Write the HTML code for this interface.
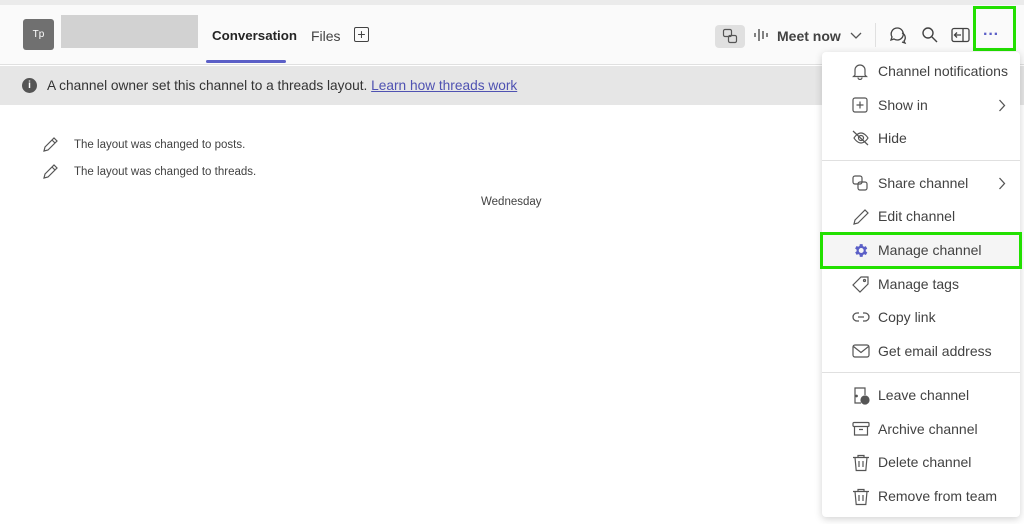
<!DOCTYPE html>
<html><head><style>
*{margin:0;padding:0;box-sizing:border-box}
body{width:1024px;height:524px;overflow:hidden;background:#fff;font-family:"Liberation Sans",sans-serif;position:relative;color:#242424}
.abs{position:absolute}
.top{left:0;top:0;width:1024px;height:5px;background:#ebebeb}
.hdr{left:0;top:5px;width:1024px;height:60px;background:#fafafa;border-bottom:1px solid #e0e0e0}
.av{left:23px;top:19px;width:31px;height:31px;background:#707070;border-radius:3px;color:#fff;font-size:10px;text-align:center;line-height:31px}
.name{left:61px;top:15px;width:137px;height:33px;background:#d2d2d2}
.tab{font-size:14px;top:28px}
.banner{left:0;top:66px;width:1024px;height:39px;background:#e6e6e6;font-size:13.7px;color:#333}
.sys{font-size:11.5px;color:#424242}
.menu{left:822px;top:52px;width:198px;height:465px;background:#fff;border-radius:4px;box-shadow:0 2px 8px rgba(0,0,0,.18)}
.it{position:absolute;left:0;width:198px;height:34px;font-size:14px;color:#424242;line-height:34px;padding-left:56px}
.it svg{position:absolute;left:30px;top:9px}
.it svg.chev{left:auto;right:14px;top:11px}
.div{position:absolute;left:0;width:198px;height:1px;background:#e0e0e0}
</style></head><body>
<div class="abs top"></div>
<div class="abs hdr"></div>
<div class="abs av">Tp</div>
<div class="abs name"></div>
<div class="abs tab" style="left:212px;font-weight:bold;color:#242424;font-size:13.3px">Conversation</div>
<div class="abs" style="left:206px;top:60px;width:80px;height:3px;background:#5b5fc7;border-radius:2px"></div>
<div class="abs tab" style="left:311px;color:#424242">Files</div>
<div class="abs" style="left:354px;top:27px;width:15px;height:15px;border:1.3px solid #424242;border-radius:2px;text-align:center;line-height:12px;font-size:14px;color:#424242">+</div>
<div class="abs" style="left:715px;top:25px;width:30px;height:23px;background:#e0e0e0;border-radius:4px"></div>
<svg class="abs" style="left:722px;top:28px" width="16" height="16" viewBox="0 0 16 16" fill="none" stroke="#555" stroke-width="1.2"><rect x="1.5" y="1.5" width="8" height="7" rx="1.5"/><rect x="6.5" y="7.5" width="8" height="7" rx="1.5"/></svg>
<svg class="abs" style="left:753px;top:26px" width="16" height="18" stroke="#424242" stroke-width="1.3"><path d="M2 7v4M6 3v12M10 5v8M14 7v4"/></svg>
<div class="abs" style="left:777px;top:28px;font-size:14px;font-weight:bold;color:#424242">Meet now</div>
<svg class="abs" style="left:850px;top:30px" width="12" height="10" fill="none" stroke="#555" stroke-width="1.3"><path d="M1 3l5 5 5-5"/></svg>
<div class="abs" style="left:875px;top:23px;width:1px;height:24px;background:#e0e0e0"></div>
<svg class="abs" style="left:888px;top:25px" width="20" height="20" fill="none" stroke="#424242" stroke-width="1.3"><path d="M9 3a6 6 0 0 0-5 9l-1 3 3-1a6 6 0 1 0 3-11z"/><path d="M14 8a5 5 0 0 1 2 8l1 2-3-1"/></svg>
<svg class="abs" style="left:921px;top:26px" width="18" height="18" fill="none" stroke="#424242" stroke-width="1.4"><circle cx="7" cy="7" r="5"/><path d="M11 11l5 5"/></svg>
<svg class="abs" style="left:951px;top:27px" width="20" height="16" fill="none" stroke="#424242" stroke-width="1.3"><rect x="1" y="1.5" width="17" height="13" rx="2"/><path d="M12 1.5v13M10 8H4M6 5.5L3.5 8 6 10.5"/></svg>
<div class="abs" style="left:983px;top:26px;color:#5b5fc7;font-size:16px;font-weight:bold">···</div>
<div class="abs" style="left:973px;top:6px;width:43px;height:45px;border:3px solid #22e000"></div>
<div class="abs banner">
<div class="abs" style="left:22px;top:12px;width:15px;height:15px;border-radius:50%;background:#555;color:#fff;font-size:10px;font-weight:bold;text-align:center;line-height:15px">i</div>
<div class="abs" style="left:47px;top:12px">A channel owner set this channel to a threads layout. <span style="color:#4f52b2;text-decoration:underline">Learn how threads work</span></div>
</div>
<svg class="abs" style="left:41px;top:136px" width="18" height="18" fill="none" stroke="#555" stroke-width="1.2"><path d="M3 15l1-4 9-9 3 3-9 9z M11 4l3 3"/></svg>
<div class="abs sys" style="left:74px;top:139px">The layout was changed to posts.</div>
<svg class="abs" style="left:41px;top:163px" width="18" height="18" fill="none" stroke="#555" stroke-width="1.2"><path d="M3 15l1-4 9-9 3 3-9 9z M11 4l3 3"/></svg>
<div class="abs sys" style="left:74px;top:166px">The layout was changed to threads.</div>
<div class="abs sys" style="left:481px;top:196px">Wednesday</div>

<div class="abs menu">
<div class="it" style="top:2px"><svg width="16" height="17" fill="none" stroke="#555" stroke-width="1.2"><path d="M3 12V7a5 5 0 0 1 10 0v5l1.5 1.5h-13zM6 14.5a2 2 0 0 0 4 0"/></svg>Channel notifications</div>
<div class="it" style="top:36px"><svg width="16" height="16" fill="none" stroke="#555" stroke-width="1.2"><rect x="1" y="1" width="14" height="14" rx="2"/><path d="M8 4.5v7M4.5 8h7"/></svg>Show in<svg class="chev" width="8" height="13" fill="none" stroke="#555" stroke-width="1.3"><path d="M1.5 1l5 5.5-5 5.5"/></svg></div>
<div class="it" style="top:69px"><svg width="18" height="16" fill="none" stroke="#555" stroke-width="1.2"><path d="M1 1l15 14M2 8s3-5 7-5 7 5 7 5-3 5-7 5-7-5-7-5z"/><circle cx="9" cy="8" r="2.5"/></svg>Hide</div>
<div class="div" style="top:108px"></div>
<div class="it" style="top:114px"><svg width="16" height="16" fill="none" stroke="#555" stroke-width="1.2"><rect x="1" y="1" width="9" height="8" rx="2"/><rect x="6" y="7" width="9" height="8" rx="2"/></svg>Share channel<svg class="chev" width="8" height="13" fill="none" stroke="#555" stroke-width="1.3"><path d="M1.5 1l5 5.5-5 5.5"/></svg></div>
<div class="it" style="top:147px"><svg width="18" height="18" fill="none" stroke="#555" stroke-width="1.2"><path d="M2 16l1-4 10-10 3 3-10 10z"/></svg>Edit channel</div>
<div class="it" style="top:181px;background:#f5f5f5"><svg width="17" height="17" viewBox="0 0 24 24" fill="#5b5fc7"><path d="M19.4 13a7.5 7.5 0 0 0 0-2l2.1-1.6-2-3.5-2.5 1a7 7 0 0 0-1.7-1L15 3h-4l-.4 2.7a7 7 0 0 0-1.7 1l-2.5-1-2 3.5L6.6 11a7.5 7.5 0 0 0 0 2l-2.1 1.6 2 3.5 2.5-1a7 7 0 0 0 1.7 1L11 21h4l.4-2.7a7 7 0 0 0 1.7-1l2.5 1 2-3.5zM13 15.5a3.5 3.5 0 1 1 0-7 3.5 3.5 0 0 1 0 7z"/></svg>Manage channel</div>
<div class="it" style="top:215px"><svg width="18" height="18" fill="none" stroke="#555" stroke-width="1.2"><path d="M9 1h7v7l-8 8-7-7z"/><circle cx="12.5" cy="4.5" r="1"/></svg>Manage tags</div>
<div class="it" style="top:248px"><svg width="18" height="16" fill="none" stroke="#555" stroke-width="1.3"><path d="M7 4H5a4 4 0 0 0 0 8h2M11 4h2a4 4 0 0 1 0 8h-2M6 8h6"/></svg>Copy link</div>
<div class="it" style="top:282px"><svg width="18" height="16" fill="none" stroke="#555" stroke-width="1.2"><rect x="1" y="2" width="16" height="12" rx="2"/><path d="M1.5 3.5l7.5 6 7.5-6"/></svg>Get email address</div>
<div class="div" style="top:320px"></div>
<div class="it" style="top:326px"><svg width="18" height="18" fill="none" stroke="#555" stroke-width="1.2"><path d="M9 16H3V1h10v7"/><circle cx="4.5" cy="9" r=".8" fill="#555"/><circle cx="13" cy="13" r="4" fill="#555"/></svg>Leave channel</div>
<div class="it" style="top:360px"><svg width="18" height="16" fill="none" stroke="#555" stroke-width="1.2"><rect x="1" y="1.5" width="16" height="4" rx="1"/><path d="M2.5 5.5V14h13V5.5M7 8.5h4"/></svg>Archive channel</div>
<div class="it" style="top:393px"><svg width="18" height="18" fill="none" stroke="#555" stroke-width="1.2"><path d="M1 3.5h16M6 3.5V1.5h6v2M3 3.5l1.2 13h9.6L15 3.5M7 7v6M11 7v6"/></svg>Delete channel</div>
<div class="it" style="top:427px"><svg width="18" height="18" fill="none" stroke="#555" stroke-width="1.2"><path d="M1 3.5h16M6 3.5V1.5h6v2M3 3.5l1.2 13h9.6L15 3.5M7 7v6M11 7v6"/></svg>Remove from team</div>
</div>
<div class="abs" style="left:820px;top:232px;width:202px;height:37px;border:3px solid #22e000"></div>
</body></html>
